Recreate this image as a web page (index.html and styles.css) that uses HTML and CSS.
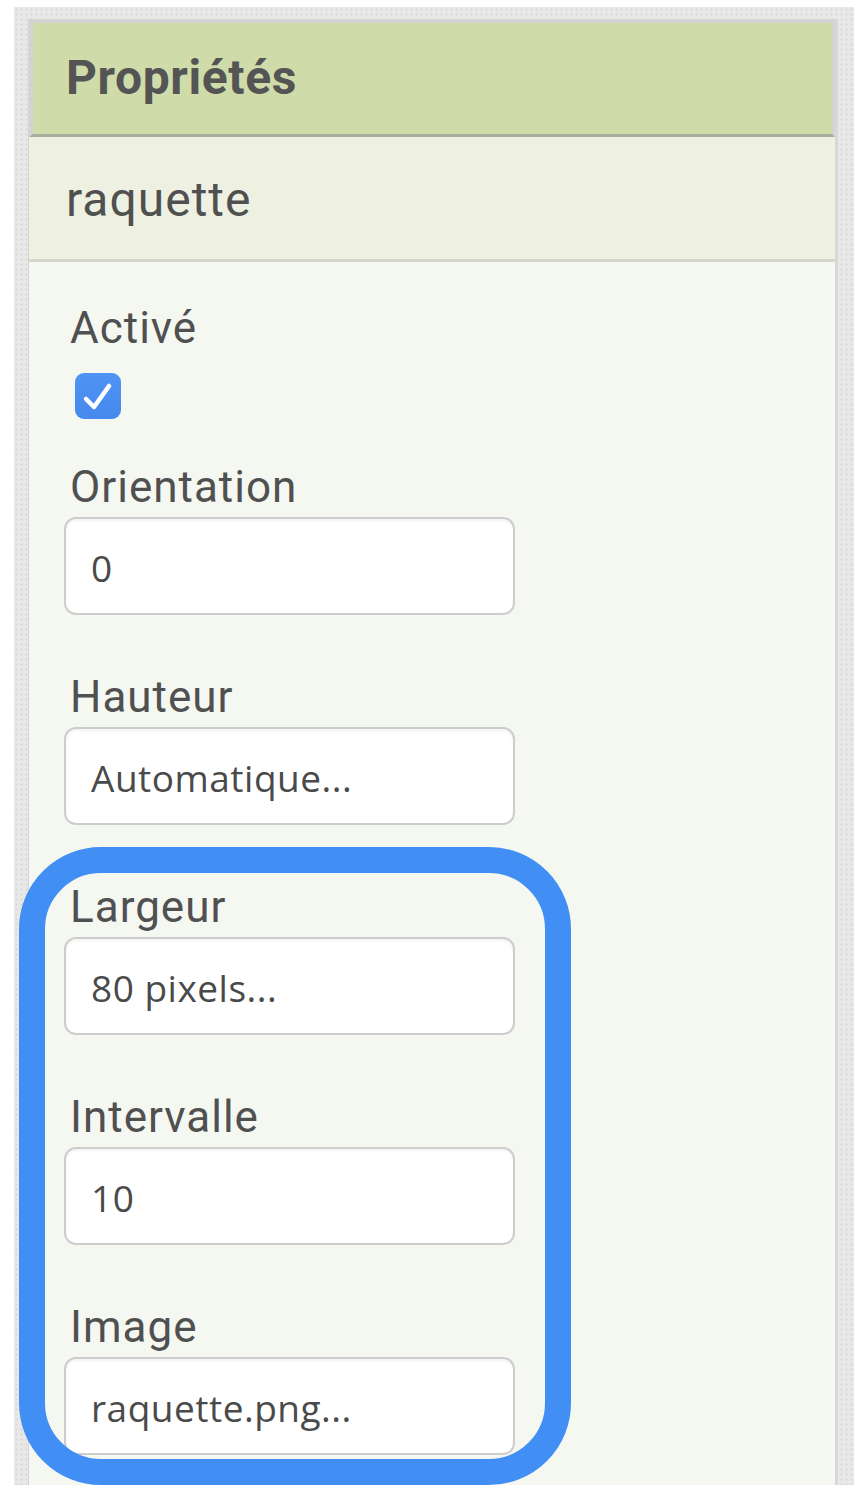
FILE: index.html
```html
<!DOCTYPE html>
<html lang="fr">
<head>
<meta charset="utf-8">
<title>Propriétés</title>
<link rel="stylesheet" href="styles.css">
</head>
<body>
<div class="frame">
  <div class="panel">
    <div class="header">Propriétés</div>
    <div class="sub">raquette</div>
    <div class="props">
      <div class="label">Activé</div>
      <div class="checkbox">
        <svg width="46" height="46" viewBox="0 0 46 46"><path d="M11 26 L19 34 L34 13" fill="none" stroke="#fff" stroke-width="4.5" stroke-linecap="round" stroke-linejoin="round"/></svg>
      </div>
      <div class="field first">
        <div class="label">Orientation</div>
        <div class="input">0</div>
      </div>
      <div class="field">
        <div class="label">Hauteur</div>
        <div class="input">Automatique...</div>
      </div>
      <div class="field">
        <div class="label">Largeur</div>
        <div class="input">80 pixels...</div>
      </div>
      <div class="field">
        <div class="label">Intervalle</div>
        <div class="input">10</div>
      </div>
      <div class="field">
        <div class="label">Image</div>
        <div class="input">raquette.png...</div>
      </div>
    </div>
  </div>
</div>
<div class="highlight"></div>
</body>
</html>
```

FILE: styles.css
```css
html, body {
  margin: 0;
  padding: 0;
  background: #ffffff;
}
body {
  position: relative;
  width: 864px;
  height: 1496px;
  overflow: hidden;
  font-family: Roboto, "Liberation Sans", sans-serif;
}
.frame {
  box-sizing: border-box;
  margin: 7px 0 0 14px;
  width: 840px;
  height: 1478px;
  padding: 12px 0 0 14px;
  background-color: #e8e8e8;
  background-image:
    radial-gradient(circle, #d6d6d6 0.8px, transparent 1.2px);
  background-size: 5px 5px;
}
.panel {
  box-sizing: border-box;
  width: 810px;
  height: 1466px;
  background: #f5f7f1;
  border-left: 1px solid #d4d4d4;
  border-right: 3px solid #d8d8d8;
  display: flex;
  flex-direction: column;
}
.header {
  box-sizing: border-box;
  height: 118px;
  background: #cfdcaa;
  border-top: 4px solid #d3d3d3;
  border-left: 4px solid #d3d3d3;
  border-right: 3px solid #d3d3d3;
  border-bottom: 3px solid #a9ad9d;
  padding: 27px 0 0 33px;
  font-size: 48px;
  line-height: 56px;
  font-weight: 700;
  letter-spacing: 0.6px;
  color: #545454;
}
.sub {
  box-sizing: border-box;
  height: 125px;
  background: #eef1e2;
  border-bottom: 3px solid #d5d7cf;
  padding: 35px 0 0 37px;
  font-size: 48px;
  line-height: 56px;
  letter-spacing: 1px;
  color: #505050;
}
.props {
  padding: 38px 0 0 35px;
  display: flex;
  flex-direction: column;
}
.label {
  padding: 2px 0 0 6px;
  font-size: 44px;
  line-height: 52px;
  letter-spacing: 1px;
  color: #505050;
}
.checkbox {
  width: 46px;
  height: 46px;
  margin: 19px 0 0 11px;
  border-radius: 9px;
  background: linear-gradient(#4f93f3, #4689ee);
}
.checkbox svg {
  display: block;
}
.field {
  margin-top: 54px;
}
.field.first {
  margin-top: 40px;
}
.input {
  box-sizing: border-box;
  margin-top: 4px;
  width: 451px;
  height: 98px;
  background: #ffffff;
  border: 2px solid #cdcdcd;
  border-radius: 12px;
  box-shadow: inset 0 2px 3px rgba(0, 0, 0, 0.05);
  padding: 4px 0 0 25px;
  font-family: "Open Sans", "DejaVu Sans", sans-serif;
  font-size: 37px;
  line-height: 90px;
  letter-spacing: 0.5px;
  color: #4a4a4a;
}
.highlight {
  position: absolute;
  box-sizing: border-box;
  left: 19px;
  top: 847px;
  width: 552px;
  height: 638px;
  border: 26px solid #418ef4;
  border-radius: 82px;
}
```
